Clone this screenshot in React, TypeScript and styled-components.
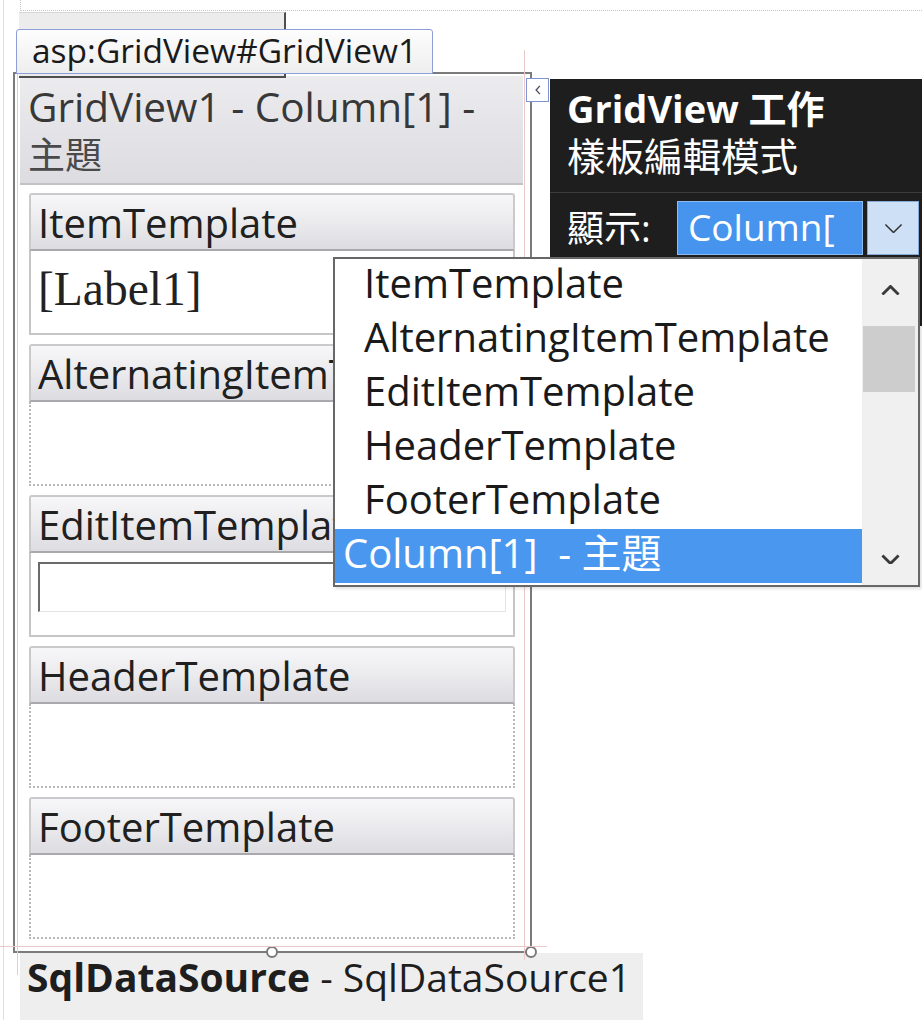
import React from 'react';
import styled, { createGlobalStyle } from 'styled-components';

type BodyKind = 'label' | 'textbox' | 'empty';

const templates: { name: string; body: BodyKind }[] = [
  { name: 'ItemTemplate', body: 'label' },
  { name: 'AlternatingItemTemplate', body: 'empty' },
  { name: 'EditItemTemplate', body: 'textbox' },
  { name: 'HeaderTemplate', body: 'empty' },
  { name: 'FooterTemplate', body: 'empty' },
];

const listItems = [
  'ItemTemplate',
  'AlternatingItemTemplate',
  'EditItemTemplate',
  'HeaderTemplate',
  'FooterTemplate',
];

const Chevron = ({ dir, size = 18, stroke = '#444', weight = 2.2 }: { dir: 'up' | 'down' | 'left'; size?: number; stroke?: string; weight?: number }) => {
  if (dir === 'left') {
    return (
      <svg width={size / 2} height={size} viewBox="0 0 8 14">
        <polyline points="6.5,1.5 1.5,7 6.5,12.5" fill="none" stroke={stroke} strokeWidth={weight} />
      </svg>
    );
  }
  const points = dir === 'up' ? '1.5,10 10,1.5 18.5,10' : '1.5,1.5 10,10 18.5,1.5';
  return (
    <svg width={size} height={size * 0.575} viewBox="0 0 20 11.5">
      <polyline points={points} fill="none" stroke={stroke} strokeWidth={weight} />
    </svg>
  );
};

export default function App() {
  return (
    <>
      <GlobalStyle />
      <Canvas>
        <LeftRule />
        <TopCorner />
        <Designer>
          <TagRow>
            <BehindTab />
            <ControlTag>asp:GridView#GridView1</ControlTag>
          </TagRow>
          <GridViewBox>
            <GridHeader>
              <div>GridView1 - Column[1] -</div>
              <HeaderCjk>主題</HeaderCjk>
            </GridHeader>
            <Cards>
              {templates.map((t) => (
                <Card key={t.name}>
                  <CardTitle>{t.name}</CardTitle>
                  <CardBody $dotted={t.body === 'empty'}>
                    {t.body === 'label' && <LabelText>[Label1]</LabelText>}
                    {t.body === 'textbox' && <TextBox />}
                  </CardBody>
                </Card>
              ))}
            </Cards>
            <Handle $left={251} />
            <Handle $left={510} />
          </GridViewBox>
          <DataSourceBar>
            <b>SqlDataSource</b> - SqlDataSource1
          </DataSourceBar>
        </Designer>

        <GuideV $left={17} $top={60} $height={915} />
        <GuideV $left={524} $top={50} $height={910} />
        <GuideH $top={946} $width={547} />

        <CollapseButton>
          <Chevron dir="left" size={12} stroke="#4a4f63" weight={1.8} />
        </CollapseButton>

        <TaskPanel>
          <TaskHeader>
            <TaskTitle>GridView 工作</TaskTitle>
            <TaskSubtitle>樣板編輯模式</TaskSubtitle>
          </TaskHeader>
          <TaskRow>
            <TaskLabel>顯示:</TaskLabel>
            <SelectBox>Column[</SelectBox>
            <SelectButton>
              <Chevron dir="down" size={19} stroke="#333" weight={1.6} />
            </SelectButton>
          </TaskRow>
        </TaskPanel>

        <DropList>
          <ListItems>
            {listItems.map((item) => (
              <ListItem key={item}>{item}</ListItem>
            ))}
            <ListItem $selected>Column[1]&nbsp; - 主題</ListItem>
          </ListItems>
          <Scrollbar>
            <ScrollArrow $height={62}>
              <Chevron dir="up" size={19} stroke="#3a3a3a" weight={3} />
            </ScrollArrow>
            <Track>
              <Thumb />
            </Track>
            <ScrollArrow $height={52}>
              <Chevron dir="down" size={19} stroke="#3a3a3a" weight={3} />
            </ScrollArrow>
          </Scrollbar>
        </DropList>
      </Canvas>
    </>
  );
}

const GlobalStyle = createGlobalStyle`
  html, body {
    margin: 0;
    padding: 0;
    background: #fff;
  }
  body {
    font-family: 'Open Sans', 'Noto Sans CJK TC', sans-serif;
    color: #1e1e1e;
  }
`;

const Canvas = styled.div`
  position: relative;
  width: 922px;
  height: 1020px;
  overflow: hidden;
  background: #fff;
`;

const LeftRule = styled.div`
  position: absolute;
  left: 3px;
  top: 0;
  bottom: 0;
  width: 1px;
  background: #dedede;
`;

const TopCorner = styled.div`
  position: absolute;
  left: 20px;
  right: 0;
  top: 0;
  height: 10px;
  border-left: 1px dotted #c4c4c4;
  border-bottom: 1px dotted #c4c4c4;
`;

const GuideV = styled.div<{ $left: number; $top: number; $height: number }>`
  position: absolute;
  left: ${(p) => p.$left}px;
  top: ${(p) => p.$top}px;
  height: ${(p) => p.$height}px;
  width: 1px;
  background: #e9c9c9;
  pointer-events: none;
`;

const GuideH = styled.div<{ $top: number; $width: number }>`
  position: absolute;
  left: 0;
  top: ${(p) => p.$top}px;
  width: ${(p) => p.$width}px;
  height: 1px;
  background: #e9c9c9;
  pointer-events: none;
`;

const Designer = styled.div`
  display: flex;
  flex-direction: column;
  padding-top: 12px;
`;

const TagRow = styled.div`
  position: relative;
  height: 60px;
  z-index: 2;
`;

const BehindTab = styled.div`
  margin-left: 19px;
  width: 267px;
  height: 66px;
  box-sizing: border-box;
  background: #ececec;
  border-top: 1px solid #d6d6d6;
  border-right: 2px solid #4f4f4f;
  border-bottom: 2px solid #4f4f4f;
`;

const ControlTag = styled.div`
  position: absolute;
  left: 16px;
  top: 17px;
  height: 45px;
  box-sizing: border-box;
  padding: 0 15px 3px;
  font-size: 33.5px;
  line-height: 40px;
  white-space: nowrap;
  color: #1a1a1a;
  background: linear-gradient(#fdfdfd, #eeeeee);
  border: 1px solid #8d9fd8;
  border-radius: 3px 3px 0 0;
`;

const GridViewBox = styled.div`
  position: relative;
  margin-left: 13px;
  width: 519px;
  height: 881px;
  box-sizing: border-box;
  border: 2px solid #7b7b7b;
  padding: 2px 7px 0 5px;
  background: #fff;
`;

const GridHeader = styled.div`
  height: 109px;
  box-sizing: border-box;
  padding: 8px 0 0 8px;
  font-size: 40.5px;
  line-height: 46px;
  color: #383838;
  white-space: nowrap;
  background: linear-gradient(#ececef, #dcdce1);
  border-bottom: 2px solid #c2c2c6;
`;

const HeaderCjk = styled.div`
  margin-top: 3px;
  font-size: 37px;
  line-height: 44px;
  color: #4a4a4a;
`;

const Cards = styled.div`
  display: flex;
  flex-direction: column;
  gap: 9px;
  padding: 8px 8px 0 9px;
`;

const Card = styled.div`
  display: flex;
  flex-direction: column;
`;

const CardTitle = styled.div`
  height: 58px;
  box-sizing: border-box;
  padding: 3px 0 0 7px;
  font-size: 40px;
  line-height: 50px;
  color: #202020;
  white-space: nowrap;
  overflow: hidden;
  background: linear-gradient(#f7f7f9 0%, #ebebee 50%, #dcdce1 100%);
  border: 2px solid #cacacd;
  border-bottom-color: #a9a9ad;
  border-radius: 3px 3px 0 0;
`;

const CardBody = styled.div<{ $dotted: boolean }>`
  height: 84px;
  box-sizing: border-box;
  padding: 0 7px;
  background: #fff;
  border: 2px ${(p) => (p.$dotted ? 'dotted #b8b8b8' : 'solid #c6c6c6')};
  border-top: none;
`;

const LabelText = styled.div`
  margin-top: 12px;
  font-family: 'Liberation Serif', 'Noto Serif CJK TC', serif;
  font-size: 47.5px;
  line-height: 52px;
  color: #222;
`;

const TextBox = styled.div`
  margin-top: 9px;
  width: 468px;
  height: 50px;
  box-sizing: border-box;
  border-top: 2px solid #6a6a6a;
  border-left: 2px solid #6a6a6a;
  border-right: 1px solid #e4e4e4;
  border-bottom: 1px solid #e4e4e4;
`;

const Handle = styled.div<{ $left: number }>`
  position: absolute;
  left: ${(p) => p.$left}px;
  bottom: -7px;
  width: 12px;
  height: 12px;
  box-sizing: border-box;
  border-radius: 50%;
  border: 2px solid #7a7a7a;
  background: #fff;
`;

const DataSourceBar = styled.div`
  margin-left: 20px;
  width: 623px;
  height: 67px;
  box-sizing: border-box;
  padding-left: 7px;
  font-size: 39px;
  line-height: 48px;
  white-space: nowrap;
  color: #1e1e1e;
  background: #eeeeee;

  b {
    font-weight: 700;
  }
`;

const CollapseButton = styled.div`
  position: absolute;
  left: 526px;
  top: 78px;
  width: 23px;
  height: 24px;
  box-sizing: border-box;
  display: flex;
  align-items: center;
  justify-content: center;
  background: #fff;
  border: 1px solid #7f92d2;
  z-index: 3;
`;

const TaskPanel = styled.div`
  position: absolute;
  left: 550px;
  top: 79px;
  width: 372px;
  height: 247px;
  background: #1e1e1e;
  color: #fff;
  z-index: 3;
`;

const TaskHeader = styled.div`
  padding: 5px 0 12px 17px;
  border-bottom: 1px solid #3b3b3b;
  line-height: 48px;
`;

const TaskTitle = styled.div`
  font-size: 38px;
  font-weight: 700;
`;

const TaskSubtitle = styled.div`
  font-size: 38.5px;
`;

const TaskRow = styled.div`
  display: flex;
  align-items: center;
  padding: 8px 0 0 17px;
`;

const TaskLabel = styled.div`
  width: 110px;
  font-size: 37px;
  line-height: 54px;
`;

const SelectBox = styled.div`
  width: 186px;
  height: 54px;
  box-sizing: border-box;
  padding-left: 10px;
  font-size: 37px;
  line-height: 50px;
  white-space: nowrap;
  overflow: hidden;
  color: #fff;
  background: #4694ee;
  border: 1px solid #8dbbf0;
`;

const SelectButton = styled.div`
  margin-left: 4px;
  width: 52px;
  height: 54px;
  box-sizing: border-box;
  display: flex;
  align-items: center;
  justify-content: center;
  background: #cde0f6;
  border: 1px solid #86a9d6;
`;

const DropList = styled.div`
  position: absolute;
  left: 333px;
  top: 257px;
  width: 587px;
  height: 330px;
  box-sizing: border-box;
  display: flex;
  background: #fff;
  border: 2px solid #676767;
  box-shadow: 2px 2px 3px rgba(0, 0, 0, 0.12);
  z-index: 4;
`;

const ListItems = styled.div`
  flex: 1;
  display: flex;
  flex-direction: column;
`;

const ListItem = styled.div<{ $selected?: boolean }>`
  height: 54px;
  box-sizing: border-box;
  padding-left: ${(p) => (p.$selected ? 8 : 29)}px;
  font-size: 40px;
  line-height: 48px;
  white-space: nowrap;
  color: ${(p) => (p.$selected ? '#fff' : '#1a1a1a')};
  background: ${(p) => (p.$selected ? '#4a97f0' : 'transparent')};
`;

const Scrollbar = styled.div`
  width: 56px;
  display: flex;
  flex-direction: column;
  background: #f0f0f0;
`;

const ScrollArrow = styled.div<{ $height: number }>`
  height: ${(p) => p.$height}px;
  display: flex;
  align-items: center;
  justify-content: center;
`;

const Track = styled.div`
  flex: 1;
`;

const Thumb = styled.div`
  margin: 5px 3px 0 1px;
  height: 66px;
  background: #cdcdcd;
`;
